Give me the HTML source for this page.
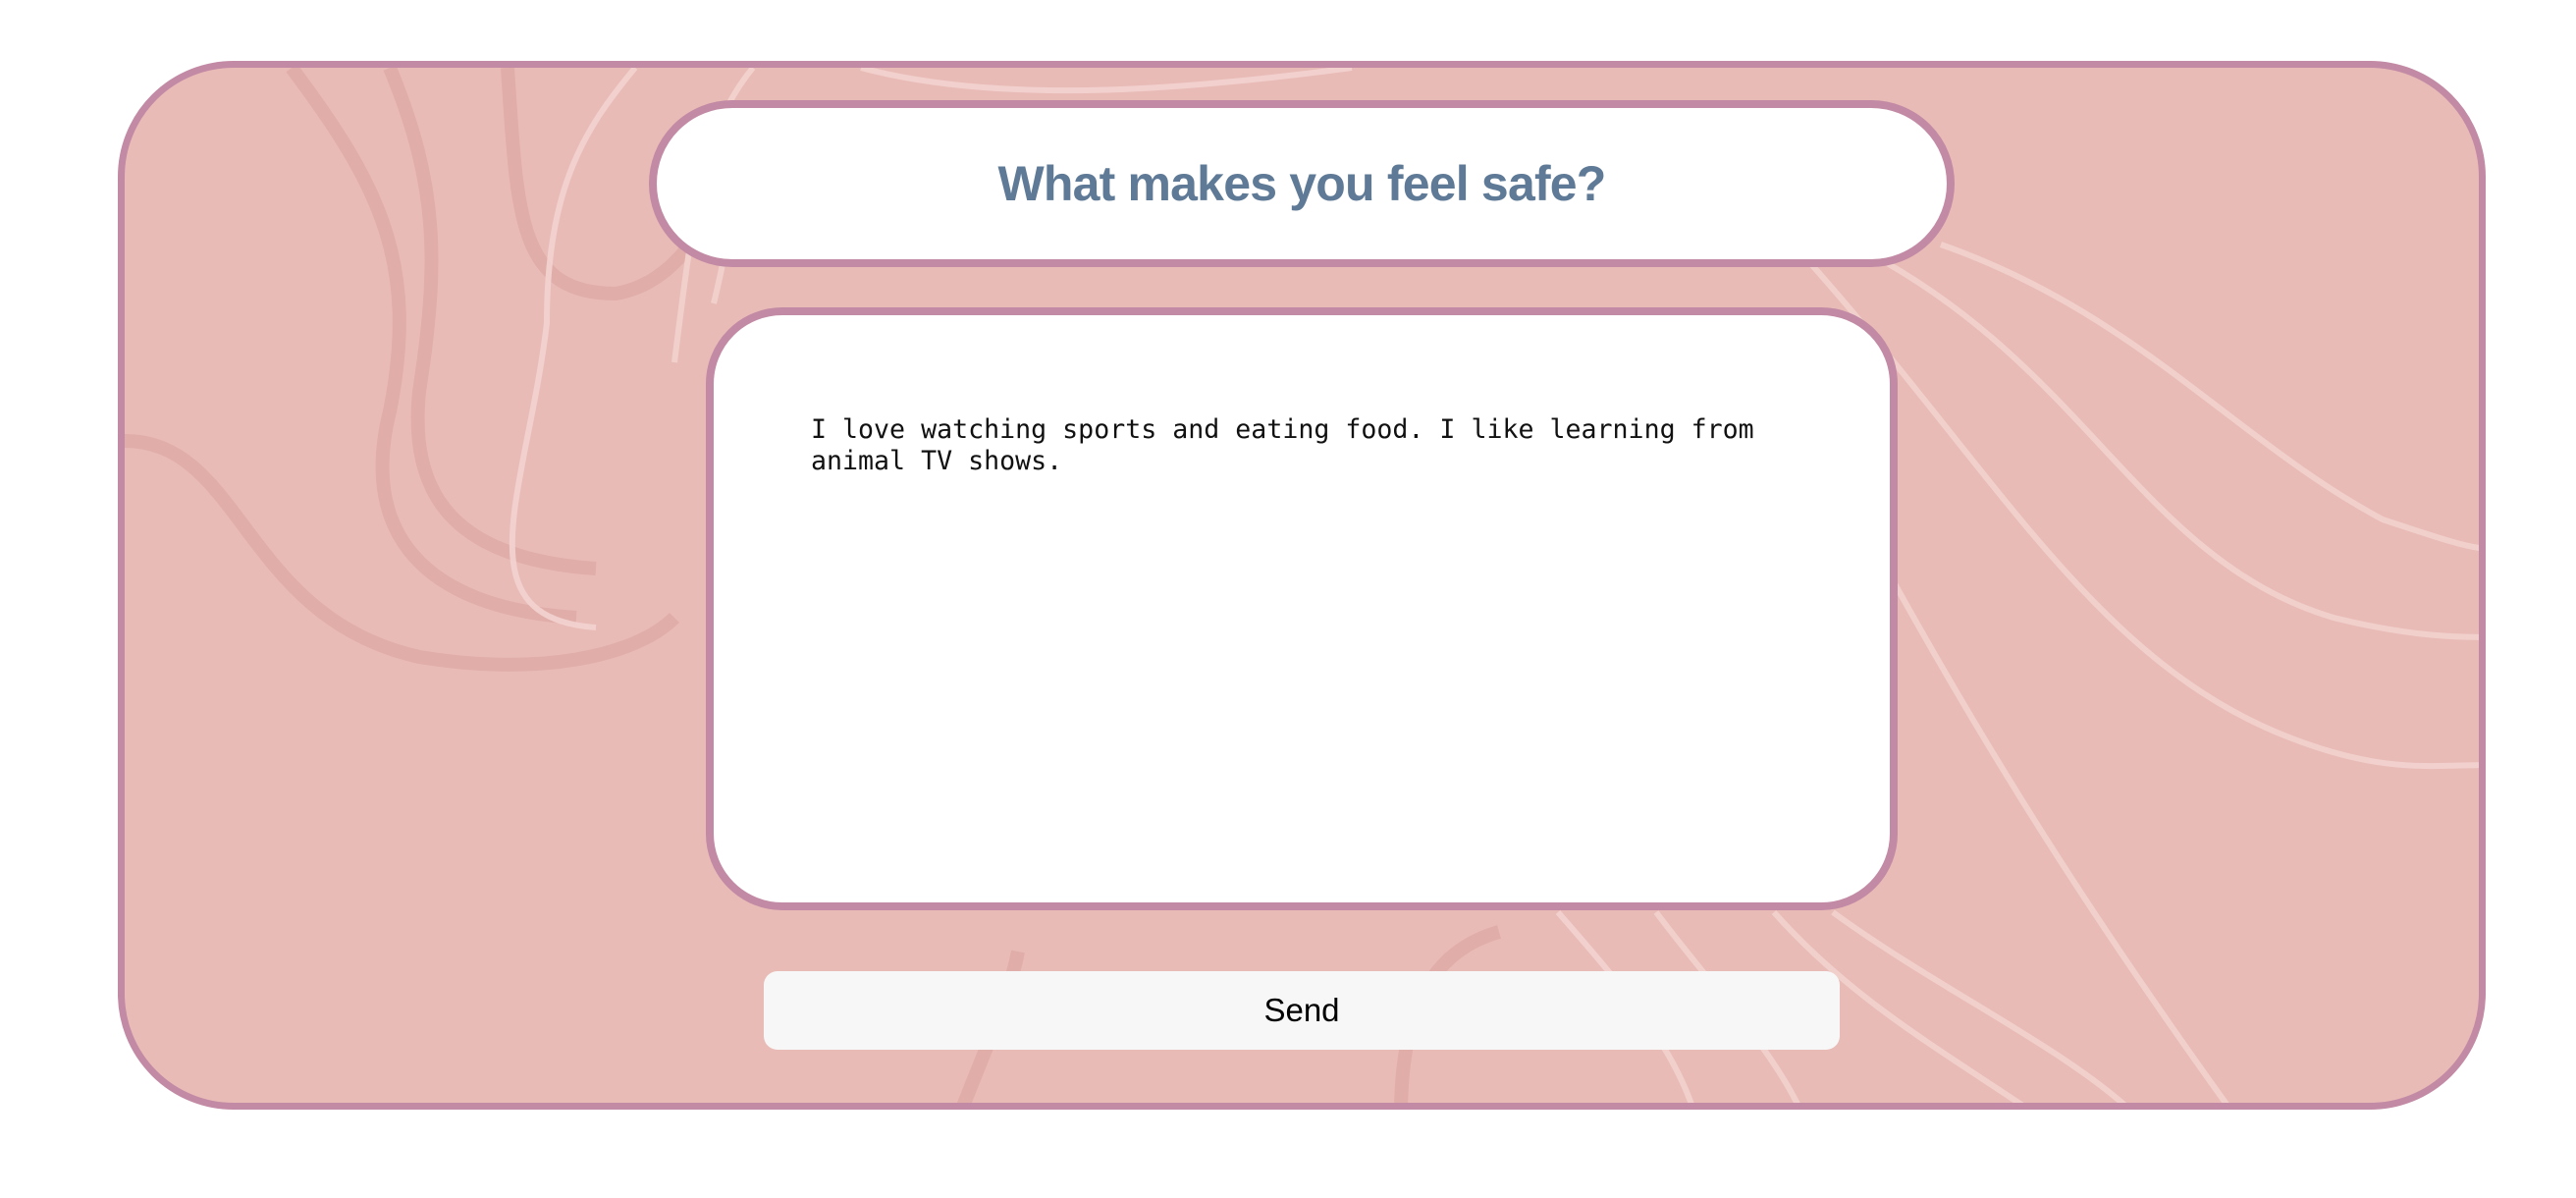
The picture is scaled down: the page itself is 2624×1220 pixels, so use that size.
<!DOCTYPE html>
<html><head><style>
html,body{margin:0;padding:0;background:#fff;width:2624px;height:1220px;overflow:hidden;font-family:"Liberation Sans",sans-serif}
.card{position:absolute;left:120px;top:62px;width:2412px;height:1068px;box-sizing:border-box;border:7px solid #c28aa4;border-radius:118px;background:#e8bbb7;overflow:hidden}
.card svg{position:absolute;left:0;top:0}
.title{position:absolute;left:661px;top:102px;width:1330px;height:170px;box-sizing:border-box;border:8px solid #c28aa4;border-radius:85px;background:#fff;display:flex;align-items:center;justify-content:center;color:#5f7a96;font-weight:bold;font-size:50px;letter-spacing:-0.8px}
.ta{position:absolute;left:719px;top:313px;width:1214px;height:614px;box-sizing:border-box;border:8px solid #c28aa4;border-radius:78px;background:#fff;padding:101px 0 0 99px;font-family:"DejaVu Sans Mono","Liberation Mono",monospace;font-size:26.6px;line-height:32px;color:#111;white-space:pre}
.send{position:absolute;left:778px;top:989px;width:1096px;height:80px;border-radius:14px;background:#f7f7f7;display:flex;align-items:center;justify-content:center;font-size:33px;color:#000}
</style></head><body>
<div class="card">
<svg width="2410" height="1068" viewBox="0 0 2410 1068" fill="none">
<g stroke="#d9a09c" stroke-width="14" opacity="0.5">
<path d="M0 380 C120 380 120 560 300 600 C420 620 520 600 560 560"/>
<path d="M170 0 C260 120 300 200 270 350 C240 470 300 550 460 560"/>
<path d="M270 0 C320 120 320 200 300 330 C290 430 330 500 480 510"/>
<path d="M390 0 C400 150 400 230 500 230 C560 220 600 160 620 80"/>
<path d="M1300 1068 C1300 960 1330 900 1400 880"/>
<path d="M850 1068 C880 990 900 950 910 900"/>
</g>
<g stroke="#f3d3cf" stroke-width="6" opacity="0.9">
<path d="M520 0 C470 60 430 120 430 260 C410 430 340 560 480 570"/>
<path d="M640 0 C590 60 580 140 560 300"/>
<path d="M680 40 C620 100 620 160 600 240"/>
<path d="M750 0 C900 40 1100 20 1250 0"/>
<path d="M1700 180 C1900 400 2000 600 2200 680 C2300 720 2350 710 2410 710"/>
<path d="M1760 180 C2000 300 2050 500 2250 560 C2330 580 2380 580 2410 580"/>
<path d="M1850 180 C2050 250 2150 380 2300 460 C2360 480 2390 490 2410 490"/>
<path d="M1800 520 C1900 700 2000 860 2150 1068"/>
<path d="M1740 860 C1850 940 1980 1000 2050 1068"/>
<path d="M1680 860 C1760 950 1850 1000 1950 1068"/>
<path d="M1560 860 C1620 940 1680 1000 1710 1068"/>
<path d="M1460 860 C1530 940 1580 1000 1600 1068"/>
</g>
</svg>
</div>
<div class="title">What makes you feel safe?</div>
<div class="ta">I love watching sports and eating food. I like learning from
animal TV shows.</div>
<div class="send">Send</div>
</body></html>
